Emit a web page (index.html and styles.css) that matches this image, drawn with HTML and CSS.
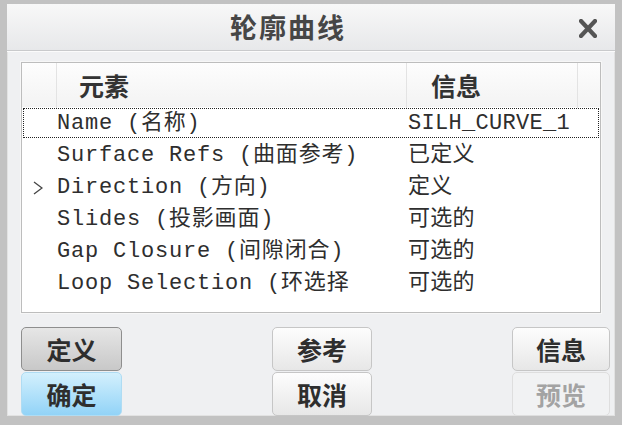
FILE: index.html
```html
<!DOCTYPE html>
<html lang="zh-CN">
<head>
    <meta charset="UTF-8">
    <title>轮廓曲线</title>
    <link rel="stylesheet" href="styles.css">
</head>
<body>
    <div class="window">
        <div class="titlebar">
            <span class="title">轮廓曲线</span>
            <span class="close">
                <svg width="18" height="19" viewBox="0 0 18 19"><path d="M2 2 L16 17 M16 2 L2 17" stroke="#555" stroke-width="4.2" stroke-linecap="square"/></svg>
            </span>
        </div>
        <div class="content">
            <div class="list">
                <div class="list-head">
                    <div class="hcell"></div>
                    <div class="hcell hel">元素</div>
                    <div class="hcell hinfo">信息</div>
                    <div class="hcell hlast"></div>
                </div>
                <div class="row focus">
                    <span class="mark"></span>
                    <span class="el">Name (名称)</span>
                    <span class="info">SILH_CURVE_1</span>
                </div>
                <div class="row">
                    <span class="mark"></span>
                    <span class="el">Surface Refs (曲面参考)</span>
                    <span class="info">已定义</span>
                </div>
                <div class="row">
                    <span class="mark"><svg width="10" height="14" viewBox="0 0 10 14"><path d="M1 1 L9 7 L1 13" fill="none" stroke="#444" stroke-width="1.3"/></svg></span>
                    <span class="el">Direction (方向)</span>
                    <span class="info">定义</span>
                </div>
                <div class="row">
                    <span class="mark"></span>
                    <span class="el">Slides (投影画面)</span>
                    <span class="info">可选的</span>
                </div>
                <div class="row">
                    <span class="mark"></span>
                    <span class="el">Gap Closure (间隙闭合)</span>
                    <span class="info">可选的</span>
                </div>
                <div class="row">
                    <span class="mark"></span>
                    <span class="el">Loop Selection (环选择</span>
                    <span class="info">可选的</span>
                </div>
            </div>
            <div class="buttons">
                <a href="javascript:;" class="btn pressed">定义</a>
                <a href="javascript:;" class="btn mid">参考</a>
                <a href="javascript:;" class="btn">信息</a>
                <a href="javascript:;" class="btn ok">确定</a>
                <a href="javascript:;" class="btn mid">取消</a>
                <a href="javascript:;" class="btn disabled">预览</a>
            </div>
        </div>
    </div>
</body>
</html>
```
FILE: styles.css
```css
* {
    margin: 0;
    padding: 0;
    box-sizing: border-box;
}

body {
    background: #c4c4c4;
    font-family: "Liberation Sans", "Noto Sans CJK SC", sans-serif;
}

a {
    text-decoration: none;
}

.window {
    width: 622px;
    height: 425px;
    border-style: solid;
    border-color: #c2c2c2;
    border-width: 4px 7px 9px 7px;
    background: #eff0f2;
    box-shadow: inset 0 0 0 1px #e2e2e2;
    display: flex;
    flex-direction: column;
}

.titlebar {
    height: 47px;
    flex: none;
    display: flex;
    align-items: center;
    justify-content: center;
    padding-right: 46px;
    background: linear-gradient(#f8f8f8, #e7e8ea);
    border-bottom: 1px solid #c9cacc;
    box-shadow: 0 1px 0 #fbfbfb;
    position: relative;
}

.title {
    font-family: "Noto Sans CJK SC", sans-serif;
    font-weight: bold;
    font-size: 27px;
    color: #464646;
    letter-spacing: 2px;
    margin-top: -2px;
}

.close {
    position: absolute;
    right: 18px;
    top: 15px;
    display: flex;
}

.content {
    padding: 11px 14px 0 14px;
}

.list {
    height: 251px;
    background: #fff;
    border: 1px solid #bdbdbd;
    box-shadow: 0 0 0 1px #f7f7f7;
}

.list-head {
    height: 44px;
    display: grid;
    grid-template-columns: 35px 350px 171px 1fr;
    background: linear-gradient(#fdfdfd, #f3f3f3);
}

.hcell {
    border-right: 1px solid #e3e3e3;
    font-family: "Noto Sans CJK SC", sans-serif;
    font-weight: bold;
    font-size: 25px;
    color: #333;
    line-height: 45px;
}

.hel {
    padding-left: 22px;
}

.hinfo {
    padding-left: 24px;
}

.hlast {
    border-right: none;
}

.row {
    height: 32px;
    padding-top: 4px;
    display: grid;
    grid-template-columns: 35px 350px 1fr;
    align-items: start;
    font-family: "Liberation Mono", "Noto Sans CJK SC", monospace;
    font-size: 22px;
    line-height: 26px;
    letter-spacing: 0.8px;
    color: #2e2e2e;
    white-space: nowrap;
}

.focus {
    outline: 1px dotted #222;
    outline-offset: -2px;
}

.mark {
    display: flex;
    padding: 6px 0 0 11px;
}

.el {
    overflow: hidden;
}

.info {
    padding-left: 1px;
    letter-spacing: 0.3px;
}

.buttons {
    margin-top: 14px;
    margin-right: -9px;
    display: grid;
    grid-template-columns: 251px 240px 98px;
    row-gap: 1px;
}

.btn {
    width: 98px;
    height: 44px;
    display: flex;
    align-items: center;
    justify-content: center;
    font-family: "Noto Sans CJK SC", sans-serif;
    font-weight: bold;
    font-size: 25px;
    color: #2e2e2e;
    background: linear-gradient(#fdfdfd, #e7e7e7);
    border: 1px solid #c6c6c6;
    border-radius: 5px;
}

.pressed {
    width: 101px;
    background: linear-gradient(#e6e6e6, #c8c8c8);
    border-color: #8e8e8e;
}

.ok {
    width: 101px;
    background: linear-gradient(#d3f0fd, #92d3f7);
    border-color: #afdcf3;
}

.mid {
    width: 100px;
}

.disabled {
    color: #a3a3a3;
    background: #f1f2f3;
    border-color: #dedede;
}
```
